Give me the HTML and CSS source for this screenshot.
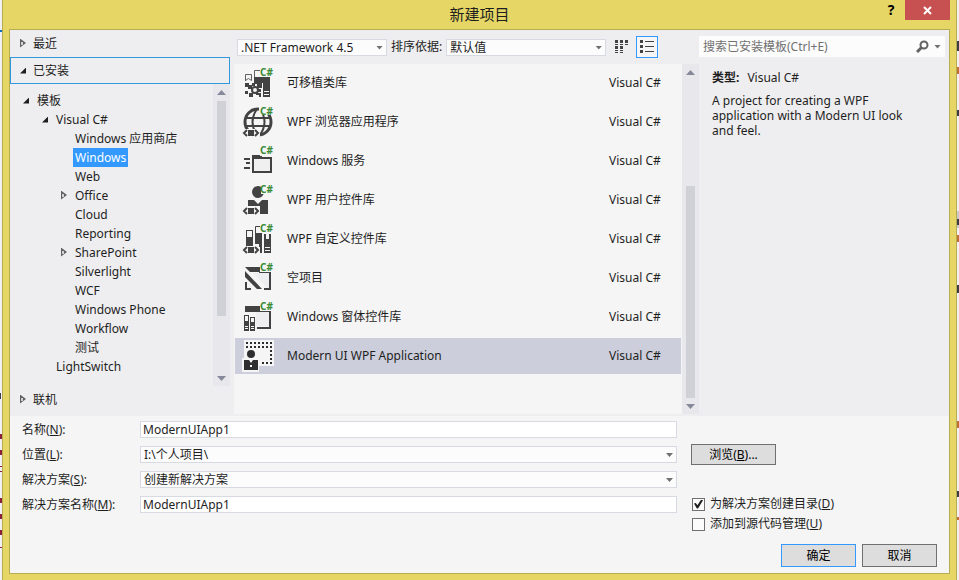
FILE: index.html
```html
<!DOCTYPE html>
<html lang="zh-CN">
<head>
<meta charset="utf-8">
<title>新建项目</title>
<link rel="stylesheet" href="styles.css">
</head>
<body>
<div class="desktop">
<div class="gutter left"></div>
<main class="dialog">
  <header class="titlebar">
    <h1>新建项目</h1>
    <div class="window-buttons">
      <button class="help" aria-label="帮助">?</button>
      <button class="close" aria-label="关闭"><svg width="9" height="9" viewBox="0 0 9 9"><path d="M1 1l7 7M8 1l-7 7" stroke="#fff" stroke-width="2"/></svg></button>
    </div>
  </header>

  <div class="content">
    <div class="browser">
      <nav class="sidebar">
        <button class="section"><i class="arrow closed"></i>最近</button>
        <button class="section active"><i class="arrow open"></i>已安装</button>
        <div class="tree-pane">
          <ul class="tree">
            <li><div class="node"><i class="arrow open"></i><span>模板</span></div>
              <ul>
                <li><div class="node"><i class="arrow open"></i><span>Visual C#</span></div>
                  <ul>
                    <li><div class="node"><i class="arrow"></i><span>Windows 应用商店</span></div></li>
                    <li><div class="node"><i class="arrow"></i><span class="selected">Windows</span></div></li>
                    <li><div class="node"><i class="arrow"></i><span>Web</span></div></li>
                    <li><div class="node"><i class="arrow closed"></i><span>Office</span></div></li>
                    <li><div class="node"><i class="arrow"></i><span>Cloud</span></div></li>
                    <li><div class="node"><i class="arrow"></i><span>Reporting</span></div></li>
                    <li><div class="node"><i class="arrow closed"></i><span>SharePoint</span></div></li>
                    <li><div class="node"><i class="arrow"></i><span>Silverlight</span></div></li>
                    <li><div class="node"><i class="arrow"></i><span>WCF</span></div></li>
                    <li><div class="node"><i class="arrow"></i><span>Windows Phone</span></div></li>
                    <li><div class="node"><i class="arrow"></i><span>Workflow</span></div></li>
                    <li><div class="node"><i class="arrow"></i><span>测试</span></div></li>
                  </ul>
                </li>
                <li><div class="node"><i class="arrow"></i><span>LightSwitch</span></div></li>
              </ul>
            </li>
          </ul>
          <div class="scrollbar tree-scroll"><i class="up"></i><div class="track"><div class="thumb"></div></div><i class="down"></i></div>
        </div>
        <button class="section"><i class="arrow closed"></i>联机</button>
      </nav>

      <section class="templates">
        <div class="toolbar">
          <div class="combo framework"><select aria-label="框架"><option>.NET Framework 4.5</option></select></div>
          <label for="sort">排序依据:</label>
          <div class="combo sort"><select id="sort"><option>默认值</option></select></div>
          <button class="view" aria-label="小图标"><svg width="20" height="20" viewBox="0 0 20 20" fill="#424242"><path d="M3 3h3v3h-3zM8 3h3v3h-3zM13 3h3v3h-3zM3 9h3v3h-3zM8 9h3v3h-3zM3 7h3v1h-3zM8 7h3v1h-3zM13 7h3v1h-3zM3 13h3v1h-3zM8 13h3v1h-3zM3 15h3v1h-3zM8 15h3v1h-3z"/></svg></button>
          <button class="view on" aria-label="列表"><svg width="20" height="20" viewBox="0 0 20 20" fill="#424242"><path d="M3 3h3v3h-3zM3 8h3v3h-3zM3 13h3v3h-3zM8 4h9v1h-9zM8 9h9v1h-9zM8 14h9v1h-9z"/></svg></button>
        </div>
        <div class="list-pane">
          <ul class="list">
            <li class="item">
              <svg class="icon" viewBox="0 0 34 36"><path d="M3.500 16v-6.500h6v6l-3-2-3 2zM12.500 13v-7.500h6" fill="none" stroke="#626262"/><path d="M14 12h6v11h-5v-4h-3v-7h2zM22 12h6v20h-7v-16h1zM3 18h4v2h3v-2h3v3h-3v3h-4v-2h-3zM3 26h3v3h-3zM7 28h4v4h-4zM16 24h3v3h-3zM14 28h5v4h-2v-2h-3z" fill="#424242"/><circle cx="13" cy="25" r="3" fill="none" stroke="#424242" stroke-width="2"/><path d="M22 26.500h5M22 29.500h5" stroke="#f5f5f5"/><rect x="18" y="3" width="13" height="9" fill="#f5f5f5"/><path d="M26 12h2v4h-2zM20 12h2v6h-2z" fill="#424242"/><text x="18" y="11">C#</text></svg>
              <span class="name">可移植类库</span><span class="lang">Visual C#</span></li>
            <li class="item">
              <svg class="icon" viewBox="0 0 34 36"><g fill="none" stroke="#424242" stroke-width="2"><circle cx="16" cy="18" r="13" stroke-width="3"/><path d="M4 14h24M3 22h26"/><path d="M15 5q-9 13 0 26M18 5q9 13 0 26"/></g><path d="M0 25h18v8h-18zM17 2h15v9h-15z" fill="#f5f5f5"/><path d="M6 26h6v6h-6z" fill="#424242"/><path d="M5 26l-3 3 3 3M13 26l3 3-3 3" fill="none" stroke="#424242" stroke-width="2"/><text x="18" y="11">C#</text></svg>
              <span class="name">WPF 浏览器应用程序</span><span class="lang">Visual C#</span></li>
            <li class="item">
              <svg class="icon" viewBox="0 0 34 36"><path d="M10 12h10v2h10v16h-20z" fill="#424242"/><path d="M12 16h16v12h-16z" fill="#f0f0f1"/><path d="M2 15h6v2h-6zM4 19h4v2h-4zM2 24h6v2h-6z" fill="#424242"/><rect x="18" y="4" width="12" height="9" fill="#f5f5f5"/><text x="18" y="11">C#</text></svg>
              <span class="name">Windows 服务</span><span class="lang">Visual C#</span></li>
            <li class="item">
              <svg class="icon" viewBox="0 0 34 36"><circle cx="16" cy="10" r="6" fill="#424242"/><path d="M6 18h6l4 4 4-4h6v14h-20z" fill="#424242"/><path d="M0 24h18v8h-18zM19 3h14v9h-14z" fill="#f5f5f5"/><path d="M6 26h6v6h-6zM18 24h8v8h-8z" fill="#424242"/><path d="M5 26l-3 3 3 3M13 26l3 3-3 3" fill="none" stroke="#424242" stroke-width="2"/><text x="18" y="11">C#</text></svg>
              <span class="name">WPF 用户控件库</span><span class="lang">Visual C#</span></li>
            <li class="item">
              <svg class="icon" viewBox="0 0 34 36"><path d="M4 9h7v16h-7zM13 12h7v14h-3v-3h-4zM22 13h7v19h-7z" fill="#424242"/><path d="M5 10h5v6h-5zM24 12h3v6h-3zM23 26h5v1h-5zM23 29h5v1h-5z" fill="#f5f5f5"/><path d="M13.500 13v-7.500h6" fill="none" stroke="#424242"/><path d="M18 25h2v7h-2z" fill="#424242"/><path d="M18 3h14v8h-14z" fill="#f5f5f5"/><path d="M6 26h6v6h-6z" fill="#424242"/><path d="M5 26l-3 3 3 3M13 26l3 3-3 3" fill="none" stroke="#424242" stroke-width="2"/><text x="18" y="11">C#</text></svg>
              <span class="name">WPF 自定义控件库</span><span class="lang">Visual C#</span></li>
            <li class="item">
              <svg class="icon" viewBox="0 0 34 36"><path d="M3 7h16v5h-11zM27 12h2v18h-2zM3 11l17 18h-5l-12-12zM3 22h2v6h4v2h-6zM22 28h7v2h-7z" fill="#424242"/><path d="M11 13h16v15h-2z" fill="#eeeef0"/><rect x="18" y="3" width="13" height="9" fill="#f5f5f5"/><path d="M17 12h10v1h-10z" fill="#424242"/><text x="18" y="11">C#</text></svg>
              <span class="name">空项目</span><span class="lang">Visual C#</span></li>
            <li class="item">
              <svg class="icon" viewBox="0 0 34 36"><path d="M3 7h16v6h-16zM18 12h11v1h-11z" fill="#424242"/><path d="M14 13h13v14h-13z" fill="#eeeef0"/><path d="M27 12h2v18h-14v-2h12zM2 16h5v16h-5zM8 18h5v14h-5z" fill="#424242"/><path d="M3 17h3v5h-3zM9 19h3v4h-3zM3 27h3v1h-3zM3 29h3v1h-3zM9 27h3v1h-3zM9 29h3v1h-3z" fill="#f5f5f5"/><rect x="18" y="3" width="13" height="9" fill="#f5f5f5"/><text x="18" y="11">C#</text></svg>
              <span class="name">Windows 窗体控件库</span><span class="lang">Visual C#</span></li>
            <li class="item chosen">
              <svg class="icon" viewBox="0 0 34 36"><path d="M2 2h30v26h-15v6h-17v-14h2z" fill="#f5f5f5"/><path d="M4 5h27M4 9h27M20 25h11" stroke="#2d2d30" stroke-width="2" stroke-dasharray="2 2"/><path d="M29 4v22" stroke="#2d2d30" stroke-width="2" stroke-dasharray="2 2"/><circle cx="9" cy="16" r="4" fill="#2d2d30"/><path d="M2 22h5l2 3 2-3h5v10h-14z" fill="#2d2d30"/><path d="M8 27h2v2h-2z" fill="#f5f5f5"/></svg>
              <span class="name">Modern UI WPF Application</span><span class="lang">Visual C#</span></li>
          </ul>
          <div class="scrollbar list-scroll"><i class="up"></i><div class="track"><div class="thumb"></div></div><i class="down"></i></div>
        </div>
      </section>

      <aside class="details">
        <div class="search">
          <input type="search" aria-label="搜索" placeholder="搜索已安装模板(Ctrl+E)">
          <svg width="13" height="13" viewBox="0 0 13 13" fill="none" stroke="#626262"><circle cx="8" cy="5" r="3.500" stroke-width="2"/><path d="M5.500 7.500l-4.500 4.500" stroke-width="3"/></svg>
          <i class="drop"></i>
        </div>
        <p class="kind"><b>类型:</b><span>Visual C#</span></p>
        <p class="about">A project for creating a WPF application with a Modern UI look and feel.</p>
      </aside>
    </div>

    <form class="settings">
      <div class="fields">
        <label for="name">名称(<u>N</u>):</label>
        <input class="field" id="name" type="text" value="ModernUIApp1">
        <label for="place">位置(<u>L</u>):</label>
        <div class="combo"><select id="place"><option>I:\个人项目\</option></select></div>
        <label for="solution">解决方案(<u>S</u>):</label>
        <div class="combo"><select id="solution"><option>创建新解决方案</option></select></div>
        <label for="solname">解决方案名称(<u>M</u>):</label>
        <input class="field" id="solname" type="text" value="ModernUIApp1">
      </div>
      <div class="options">
        <button type="button" class="push browse">浏览(<u>B</u>)...</button>
        <label class="check"><input type="checkbox" checked><span>为解决方案创建目录(<u>D</u>)</span></label>
        <label class="check"><input type="checkbox"><span>添加到源代码管理(<u>U</u>)</span></label>
        <div class="actions">
          <button type="submit" class="push primary">确定</button>
          <button type="button" class="push">取消</button>
        </div>
      </div>
    </form>
  </div>
</main>
<div class="gutter right"></div>
</div>
</body>
</html>
```

FILE: styles.css
```css
* { box-sizing: border-box; }
body, h1, ul, p { margin: 0; padding: 0; }
ul { list-style: none; }
body {
  font: 12px/16px "Noto Sans", "Noto Sans CJK SC", sans-serif;
  color: #1e1e1e;
  background: #e5d665;
}
button, input, select {
  font: inherit;
  color: inherit;
  margin: 0;
  padding: 0;
  border: 0;
  border-radius: 0;
  background: none;
  appearance: none;
  outline: 0;
}

.desktop { display: flex; min-height: 100vh; background: #f1f1f3; }

/* slivers of the editor window behind the dialog */
.gutter { flex: none; width: 2px; background-repeat: no-repeat; background-size: 2px 2px; }
.gutter.left {
  --code: linear-gradient(#8a1f38, #8a1f38);
  background-image: linear-gradient(#0e70c0, #0e70c0), linear-gradient(#3c3c46, #3c3c46),
    var(--code), var(--code), var(--code), var(--code), var(--code), var(--code), var(--code), var(--code);
  background-size: 2px 2px, 1px 6px, 2px 5px, 2px 5px, 2px 1px, 2px 1px, 2px 5px, 2px 5px, 2px 5px, 2px 1px;
  background-position: 0 30px, 0 393px, 0 434px, 0 450px, 0 466px, 0 471px, 0 498px, 0 514px, 0 530px, 0 547px;
}
.gutter.right {
  --ink: linear-gradient(#3c3c46, #3c3c46);
  --tag: linear-gradient(#c07030, #c07030);
  background-image: var(--ink), var(--tag), var(--ink), var(--ink), var(--tag), var(--ink), var(--tag), var(--ink), var(--tag),
    linear-gradient(#c8c8cc, #c8c8cc);
  background-size: 2px 10px, 2px 7px, 2px 6px, 2px 6px, 2px 7px, 2px 8px, 2px 7px, 2px 6px, 2px 3px, 2px 17px;
  background-position: 0 41px, 0 67px, 0 110px, 0 219px, 0 235px, 0 285px, 0 421px, 0 491px, 0 517px, 0 211px;
}

.dialog {
  flex: 1;
  display: flex;
  flex-direction: column;
  padding: 0 6px 6px;
  background: #e5d665;
  border-left: 1px solid #b8ac52;
  border-right: 1px solid #b8ac52;
}

.titlebar { display: grid; grid-template-columns: 1fr auto 1fr; height: 29px; }
.titlebar h1 { grid-column: 2; font-size: 15px; font-weight: 400; line-height: 29px; }
.window-buttons { display: flex; justify-content: flex-end; align-items: flex-start; }
.help { width: 28px; height: 20px; font-size: 14px; font-weight: 700; color: #000; }
.close { display: grid; place-items: center; width: 45px; height: 20px; background: #c75050; }

.content {
  flex: 1;
  display: flex;
  flex-direction: column;
  background: #f5f5f5;
  border: 1px solid #b8ac52;
}
.browser {
  display: grid;
  grid-template-columns: 220px 465px 1fr;
  column-gap: 4px;
  height: 386px;
  background: #eeeef0;
}

/* sidebar */
.sidebar { display: flex; flex-direction: column; padding-bottom: 3px; }
.section {
  display: flex;
  align-items: center;
  gap: 4px;
  height: 27px;
  padding-left: 9px;
  text-align: left;
  border: 1px solid transparent;
}
.section.active { border-color: #3399dd; }
.arrow { display: block; flex: none; width: 9px; height: 10px; }
.arrow.open::before, .arrow.closed::before { content: ""; display: block; }
.arrow.open::before {
  width: 6px;
  height: 6px;
  margin-top: 2px;
  background: #1e1e1e;
  clip-path: polygon(100% 0, 100% 100%, 0 100%);
}
.arrow.closed::before {
  width: 6px;
  height: 9px;
  background: linear-gradient(#d0d0d2, #d0d0d2) 1px 3px / 2px 3px no-repeat, #626262;
  clip-path: polygon(0 0, 100% 50%, 0 100%);
}
.tree-pane { flex: 1; display: flex; min-height: 0; }
.tree { flex: 1; padding: 7px 0 0 13px; }
.tree ul { padding-left: 19px; }
.node { display: flex; align-items: center; height: 19px; gap: 3px; }
.node span { padding: 0 2px; line-height: 19px; }
.node .selected { color: #fff; background: #3399ff; }

.scrollbar {
  flex: none;
  width: 17px;
  display: flex;
  flex-direction: column;
  align-items: center;
  padding: 6px 0 5px;
  background: #e8e8ec;
}
.scrollbar .up, .scrollbar .down { width: 9px; height: 5px; background: #868999; }
.scrollbar .up { clip-path: polygon(50% 0, 100% 100%, 0 100%); }
.scrollbar .down { clip-path: polygon(0 0, 100% 0, 50% 100%); }
.track { flex: 1; display: flex; width: 9px; margin: 6px 0; }
.thumb { flex: 1; background: #d0d1d7; }
.tree-scroll .thumb { margin-bottom: 54px; }
.list-scroll .thumb { margin-top: 105px; }

/* templates */
.templates { display: flex; flex-direction: column; }
.toolbar { display: flex; align-items: center; height: 34px; padding-left: 3px; }
.toolbar label { padding: 0 4px; }
.combo { position: relative; display: flex; }
.combo select, .field {
  width: 100%;
  height: 17px;
  padding: 0 3px;
  line-height: 15px;
  background: #fcfcfc;
  border: 1px solid #d8dae3;
}
.field { padding: 0 2px; background: #fff; }
.combo::after, .drop {
  content: "";
  width: 7px;
  height: 4px;
  background: #717171;
  clip-path: polygon(0 0, 100% 0, 50% 100%);
}
.combo::after { position: absolute; right: 4px; top: 7px; pointer-events: none; }
.framework { width: 150px; }
.sort { width: 160px; margin-right: 5px; }
.view { display: grid; place-items: center; width: 22px; height: 22px; margin-right: 3px; border: 1px solid transparent; }
.view.on { background: #f5f5f5; border-color: #3399ff; }

.list-pane { flex: 1; display: flex; margin-bottom: 2px; }
.list { flex: 1; display: flex; flex-direction: column; gap: 3px; padding: 1px; background: #f5f5f5; }
.item { display: flex; align-items: center; height: 36px; padding: 0 18px 0 7px; }
.item.chosen { background: #cccedb; }
.icon { width: 34px; height: 36px; margin-right: 11px; }
.icon text { font: 700 10px "Noto Sans", sans-serif; fill: #388a34; }
.name { flex: 1; }
.lang { width: 54px; }

/* details */
.details { margin-left: -4px; padding-right: 4px; }
.search { display: flex; align-items: center; height: 21px; margin-top: 6px; padding: 0 4px; background: #fcfcfc; }
.search input { flex: 1; min-width: 0; }
.search input::placeholder { color: #717171; opacity: 1; }
.search .drop { margin-left: 5px; }
.kind { display: flex; gap: 8px; padding: 13px 13px 7px; }
.about { padding: 0 20px 0 13px; line-height: 15px; }

/* settings */
.settings { display: grid; grid-template-columns: 667px 1fr; column-gap: 14px; padding: 0 12px 5px 0; }
.fields { display: grid; grid-template-columns: 118px 1fr; grid-auto-rows: 17px; align-items: center; gap: 8px 0; padding: 5px 0 0 12px; }
.options { display: flex; flex-direction: column; align-items: flex-start; padding-top: 28px; }
.push { width: 75px; height: 23px; background: #dddddd; border: 1px solid #707070; color: #000; }
.push.primary { border-color: #3399ff; }
.push.browse { width: 85px; height: 21px; margin-bottom: 29px; }
.check { display: flex; align-items: center; gap: 5px; height: 20px; padding-left: 1px; }
.check input { width: 13px; height: 13px; border: 1px solid #707070; background: #fcfcfc; }
.check input:checked::before {
  content: "";
  display: block;
  width: 9px;
  height: 9px;
  margin: 1px;
  background: #1e1e1e;
  clip-path: polygon(0 45%, 20% 40%, 38% 65%, 80% 0, 100% 8%, 45% 100%, 32% 100%);
}
.actions { display: flex; gap: 6px; align-self: flex-end; margin-top: 10px; }
```
